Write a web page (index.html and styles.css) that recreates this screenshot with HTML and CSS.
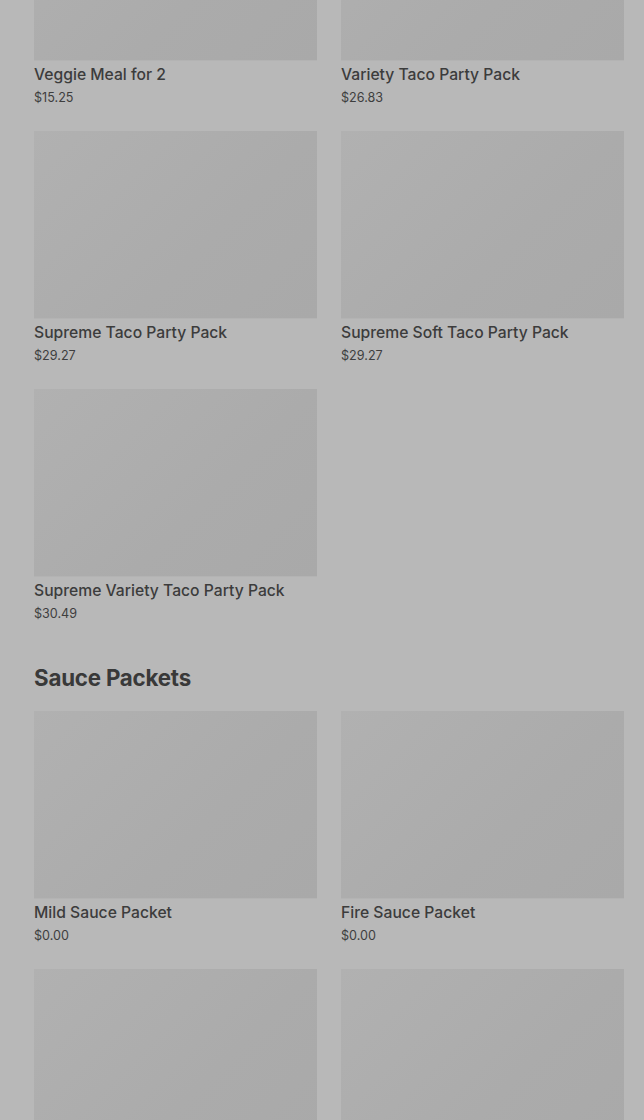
FILE: index.html
```html
<!DOCTYPE html>
<html>
<head>
<meta charset="utf-8">
<link rel="stylesheet" href="styles.css">
</head>
<body>
<main class="menu">
  <section class="section first">
    <div class="grid">
      <div class="card"><div class="thumb"></div><div class="name">Veggie Meal for 2</div><div class="price">$15.25</div></div>
      <div class="card"><div class="thumb"></div><div class="name">Variety Taco Party Pack</div><div class="price">$26.83</div></div>
      <div class="card"><div class="thumb"></div><div class="name">Supreme Taco Party Pack</div><div class="price">$29.27</div></div>
      <div class="card"><div class="thumb"></div><div class="name">Supreme Soft Taco Party Pack</div><div class="price">$29.27</div></div>
      <div class="card"><div class="thumb"></div><div class="name">Supreme Variety Taco Party Pack</div><div class="price">$30.49</div></div>
    </div>
  </section>
  <section class="section">
    <h2 class="heading">Sauce Packets</h2>
    <div class="grid">
      <div class="card"><div class="thumb"></div><div class="name">Mild Sauce Packet</div><div class="price">$0.00</div></div>
      <div class="card"><div class="thumb"></div><div class="name">Fire Sauce Packet</div><div class="price">$0.00</div></div>
      <div class="card"><div class="thumb"></div><div class="name">Hot Sauce Packet</div><div class="price">$0.00</div></div>
      <div class="card"><div class="thumb"></div><div class="name">Diablo Sauce Packet</div><div class="price">$0.00</div></div>
    </div>
  </section>
</main>
</body>
</html>
```
FILE: styles.css
```css
html, body {
  margin: 0;
  padding: 0;
  background: #b8b8b8;
  overflow: hidden;
}
body {
  font-family: Inter, "Liberation Sans", sans-serif;
  color: #3b3b3b;
}
.menu {
  padding: 0 20px 0 34px;
}
.section.first {
  margin-top: -127px;
}
.section + .section {
  margin-top: 38px;
}
.heading {
  margin: 0 0 17px;
  font-size: 22.3px;
  line-height: 32px;
  font-weight: 700;
  letter-spacing: -0.2px;
  color: #393939;
}
.grid {
  display: grid;
  grid-template-columns: 283px 283px;
  column-gap: 24px;
  row-gap: 23px;
}
.card {
  display: flex;
  flex-direction: column;
}
.thumb {
  height: 188px;
  background: linear-gradient(135deg, #b1b1b1 0%, #ababab 60%, #a9a9a9 100%);
  border-bottom: 1px solid #b3b3b3;
  box-sizing: border-box;
}
.name {
  margin-top: 2px;
  font-size: 15.7px;
  line-height: 24px;
  font-weight: 500;
  color: #3c3c3c;
}
.price {
  margin-top: 1px;
  font-size: 12.6px;
  line-height: 20px;
  color: #3e3e3e;
}
```
